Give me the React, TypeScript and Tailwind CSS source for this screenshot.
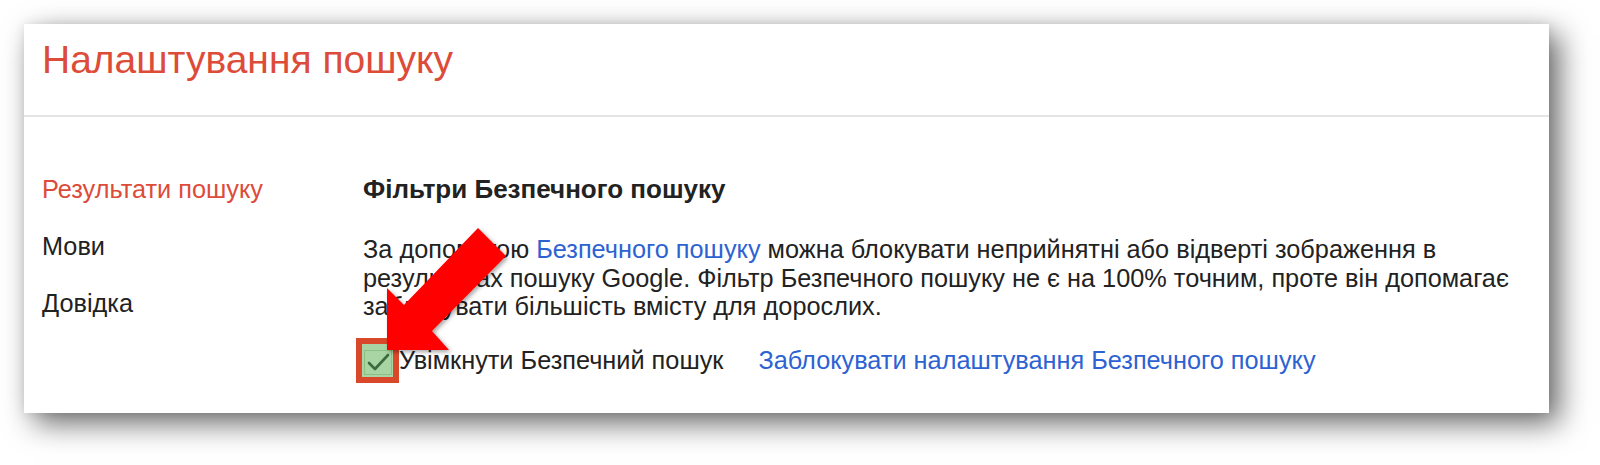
import React from "react";

const font = { fontFamily: '"Liberation Sans", Arial, sans-serif' };

function Arrow() {
  // red annotation arrow pointing at the checkbox
  return (
    <svg
      className="absolute left-0 top-0 pointer-events-none"
      width="1600"
      height="465"
      viewBox="0 0 1600 465"
    >
      <defs>
        <filter id="arrowShadow" x="-20%" y="-20%" width="140%" height="140%">
          <feDropShadow dx="2" dy="2" stdDeviation="2" floodColor="#000" floodOpacity="0.35" />
        </filter>
      </defs>
      <polygon
        filter="url(#arrowShadow)"
        fill="#ff0000"
        points="387,350 387,288 404,305 478,228 506,256 432,331 449,350"
      />
    </svg>
  );
}

export default function App() {
  return (
    <main className="relative h-[465px] w-[1600px] bg-white pl-[24px] pt-[24px]" style={font}>
      <div className="flex h-[389px] w-[1525px] flex-col bg-white shadow-[10px_10px_28px_rgba(0,0,0,0.6),0_0_10px_rgba(0,0,0,0.08)]">
        {/* header */}
        <header className="h-[93px] border-b-2 border-[#e5e5e5] px-[18px] pt-[16px]">
          <h1 className="text-[39px] leading-[40px] text-[#dd4b39]">Налаштування пошуку</h1>
        </header>

        <div className="flex pt-[58px] text-[25.3px] text-[#222]">
          {/* left nav */}
          <nav className="flex w-[339px] shrink-0 flex-col gap-[29px] pl-[18px] leading-[28px]">
            <div className="text-[#dd4b39]">Результати пошуку</div>
            <div>Мови</div>
            <div>Довідка</div>
          </nav>

          {/* content */}
          <section className="flex flex-col">
            <h2 className="text-[26px] font-bold leading-[28px]">Фільтри Безпечного пошуку</h2>
            <p className="mt-[32px] leading-[28.5px]">
              За допомогою <span className="text-[#2d62d2]">Безпечного пошуку</span> можна блокувати неприйнятні або відверті зображення в
              <br />
              результатах пошуку Google. Фільтр Безпечного пошуку не є на 100% точним, проте він допомагає
              <br />
              заблокувати більшість вмісту для дорослих.
            </p>
            <div className="mt-[17px] flex items-center leading-[29px]">
              <div className="ml-[-7px] flex h-[45px] w-[43px] shrink-0 items-center justify-center border-[6px] border-[#d9482b] bg-[#a9d4a3]">
                <div className="mt-[4px] flex h-[25px] w-[28px] items-center justify-center border border-[#8cbf86]">
                  <svg width="24" height="20" viewBox="0 0 24 20">
                    <path d="M3 11 L9 17 L22 3" fill="none" stroke="#3c6b3f" strokeWidth="2.6" strokeLinecap="round" strokeLinejoin="round" />
                  </svg>
                </div>
              </div>
              <span>Увімкнути Безпечний пошук</span>
              <span className="ml-[35px] text-[#2d62d2]">Заблокувати налаштування Безпечного пошуку</span>
            </div>
          </section>
        </div>
      </div>
      <Arrow />
    </main>
  );
}
